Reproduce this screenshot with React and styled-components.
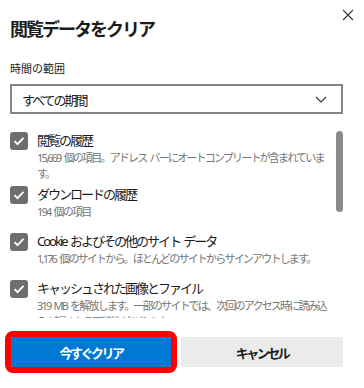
import React from 'react'
import styled, { createGlobalStyle } from 'styled-components'

const GlobalStyle = createGlobalStyle`
  body {
    margin: 0;
    background: #ffffff;
    font-family: "Noto Sans", "Noto Sans CJK JP", sans-serif;
    color: #1b1b1b;
  }
`

const Dialog = styled.div`
  width: 364px;
  height: 388px;
  box-sizing: border-box;
  padding: 15px 21px 0 10px;
  display: flex;
  flex-direction: column;
  overflow: hidden;
`

const Header = styled.div`
  display: flex;
  justify-content: space-between;
  align-items: flex-start;
`

const Title = styled.h1`
  margin: 0;
  font-size: 18px;
  line-height: 28px;
  letter-spacing: -2px;
  font-weight: 600;
  color: #1b1b1b;
`

const CloseButton = styled.button`
  border: none;
  background: transparent;
  padding: 0;
  margin: -6px -11px 0 0;
  width: 12px;
  height: 12px;
  display: flex;
`

const Label = styled.div`
  margin-top: 18px;
  font-size: 11px;
  line-height: 16px;
  color: #1b1b1b;
`

const Select = styled.div`
  margin-top: 7px;
  height: 30px;
  flex: 0 0 30px;
  box-sizing: border-box;
  border: 2px solid #858585;
  display: flex;
  align-items: center;
  justify-content: space-between;
  padding: 0 14px 0 10px;
  font-size: 13px;
  letter-spacing: -2px;
  color: #1b1b1b;
`

const List = styled.div`
  position: relative;
  margin-top: 12px;
  height: 192px;
  flex: 0 0 192px;
  overflow: hidden;
  padding-top: 5px;
  box-sizing: border-box;
`

const Thumb = styled.div`
  position: absolute;
  top: 5px;
  right: 0;
  width: 7px;
  height: 81px;
  border-radius: 4px;
  background: #8a8a8a;
`

const Item = styled.div`
  display: flex;
  gap: 9px;
  min-height: 47px;
  padding-bottom: 3px;
  padding-right: 16px;
  box-sizing: border-box;
`

const Box = styled.div`
  flex: 0 0 18px;
  height: 18px;
  margin-top: 1px;
  border-radius: 3px;
  background: #6e6e6e;
  display: flex;
  align-items: center;
  justify-content: center;
`

const Texts = styled.div`
  display: flex;
  flex-direction: column;
`

const ItemTitle = styled.div`
  font-size: 13px;
  line-height: 19px;
  letter-spacing: -2px;
  word-spacing: 2px;
  color: #1b1b1b;
`

const ItemDesc = styled.div`
  font-size: 11px;
  line-height: 16px;
  letter-spacing: -1.8px;
  word-spacing: 2px;
  color: #767676;
`

const Footer = styled.div`
  margin-top: 19px;
  display: flex;
  gap: 10px;
  padding-left: 1px;
`

const Button = styled.button`
  flex: 1;
  height: 30px;
  border-radius: 2px;
  font-family: inherit;
  font-size: 13px;
  letter-spacing: -2.5px;
  font-weight: 600;
  cursor: pointer;
  border: ${p => (p.$primary ? 'none' : '1px solid #e8e8e8')};
  background: ${p => (p.$primary ? '#0078d4' : '#ebebeb')};
  color: ${p => (p.$primary ? '#ffffff' : '#1b1b1b')};
  outline: ${p => (p.$highlight ? '6px solid #ff0000' : 'none')};
`

const items = [
  { title: '閲覧の履歴', desc: '15,669 個の項目。アドレス バーにオートコンプリートが含まれています。' },
  { title: 'ダウンロードの履歴', desc: '194 個の項目' },
  { title: 'Cookie およびその他のサイト データ', desc: '1,176 個のサイトから。ほとんどのサイトからサインアウトします。' },
  { title: 'キャッシュされた画像とファイル', desc: '319 MB を解放します。一部のサイトでは、次回のアクセス時に読み込みが遅くなる可能性があります。' },
  { title: 'パスワード', desc: '保存されたパスワード 12 件' },
]

function Check() {
  return (
    <svg width="12" height="10" viewBox="0 0 12 10">
      <path d="M1.5 5.2 L4.5 8.2 L10.5 1.8" fill="none" stroke="#fff" strokeWidth="1.8" />
    </svg>
  )
}

export default function App() {
  return (
    <>
      <GlobalStyle />
      <Dialog>
        <Header>
          <Title>閲覧データをクリア</Title>
          <CloseButton aria-label="閉じる">
            <svg width="12" height="12" viewBox="0 0 12 12">
              <path d="M1 1 L11 11 M11 1 L1 11" stroke="#333" strokeWidth="1.1" />
            </svg>
          </CloseButton>
        </Header>
        <Label>時間の範囲</Label>
        <Select>
          <span>すべての期間</span>
          <svg width="12" height="7" viewBox="0 0 12 7">
            <path d="M1 1 L6 6 L11 1" fill="none" stroke="#333" strokeWidth="1.1" />
          </svg>
        </Select>
        <List>
          {items.map(it => (
            <Item key={it.title}>
              <Box><Check /></Box>
              <Texts>
                <ItemTitle>{it.title}</ItemTitle>
                <ItemDesc>{it.desc}</ItemDesc>
              </Texts>
            </Item>
          ))}
          <Thumb />
        </List>
        <Footer>
          <Button $primary $highlight>今すぐクリア</Button>
          <Button>キャンセル</Button>
        </Footer>
      </Dialog>
    </>
  )
}
